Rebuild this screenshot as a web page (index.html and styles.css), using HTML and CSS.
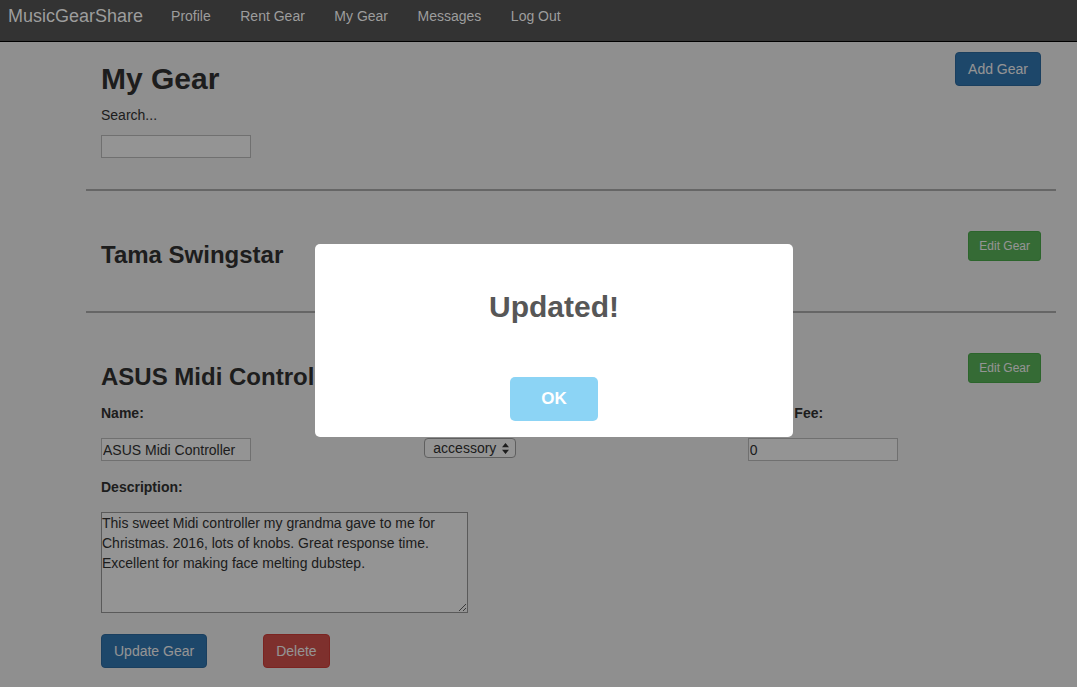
FILE: index.html
```html
<!DOCTYPE html>
<html lang="en">
<head>
<meta charset="utf-8">
<title>MusicGearShare - My Gear</title>
<link rel="stylesheet" href="styles.css">
</head>
<body>
<nav class="navbar">
  <a class="brand" href="#">MusicGearShare</a>
  <a class="nav-link" href="#">Profile</a>
  <a class="nav-link" href="#">Rent Gear</a>
  <a class="nav-link" href="#">My Gear</a>
  <a class="nav-link" href="#">Messages</a>
  <a class="nav-link" href="#">Log Out</a>
</nav>

<main class="container">
  <section class="page-head">
    <div class="page-title">
      <h2 class="title">My Gear</h2>
      <label class="search-label">Search...</label>
      <input class="text-input" type="text">
    </div>
    <button class="btn btn-primary btn-add">Add Gear</button>
  </section>

  <hr class="divider">

  <section class="gear">
    <div class="gear-head">
      <h3 class="gear-name">Tama Swingstar</h3>
      <button class="btn btn-success btn-sm">Edit Gear</button>
    </div>
  </section>

  <hr class="divider">

  <section class="gear gear-edit">
    <div class="gear-head">
      <h3 class="gear-name">ASUS Midi Controller</h3>
      <button class="btn btn-success btn-sm">Edit Gear</button>
    </div>
    <div class="field-grid">
      <label class="field-label">Name:</label>
      <label class="field-label">Category:</label>
      <label class="field-label">Rental Fee:</label>
      <input class="text-input" type="text" value="ASUS Midi Controller">
      <select class="select">
        <option>accessory</option>
      </select>
      <input class="text-input" type="text" value="0">
    </div>
    <label class="field-label desc-label">Description:</label>
    <textarea class="desc">This sweet Midi controller my grandma gave to me for Christmas. 2016, lots of knobs. Great response time. Excellent for making face melting dubstep.</textarea>
    <div class="actions">
      <button class="btn btn-primary">Update Gear</button>
      <button class="btn btn-danger">Delete</button>
    </div>
  </section>
</main>

<div class="overlay"></div>
<div class="alert">
  <h2 class="alert-title">Updated!</h2>
  <button class="alert-btn">OK</button>
</div>
</body>
</html>
```

FILE: styles.css
```css
html, body {
  margin: 0;
  padding: 0;
}
body {
  font-family: "Liberation Sans", Arial, sans-serif;
  font-size: 14px;
  line-height: 20px;
  color: #333;
  background: #f6f6f6;
  overflow: hidden;
  height: 687px;
}

/* navbar */
.navbar {
  position: relative;
  z-index: 20;
  display: flex;
  align-items: flex-start;
  height: 41px;
  background: #333;
  border-bottom: 1px solid #000;
  padding-left: 8px;
}
.brand {
  font-size: 18px;
  line-height: 20px;
  padding-top: 6px;
  color: #9d9d9d;
  text-decoration: none;
  margin-right: 13px;
}
.nav-link {
  font-size: 14px;
  line-height: 20px;
  padding: 6px 14.5px 0 15px;
  color: #9d9d9d;
  text-decoration: none;
}

/* container */
.container {
  width: 970px;
  margin-left: 86px;
}
.page-head {
  display: flex;
  justify-content: space-between;
  align-items: flex-start;
  padding: 0 15px;
}
.page-title {
  display: flex;
  flex-direction: column;
  align-items: flex-start;
  padding-bottom: 31px;
}
.title {
  margin: 20px 0 10px;
  font-size: 30px;
  line-height: 33px;
  font-weight: bold;
  color: #333;
}
.search-label {
  display: block;
  margin-bottom: 10px;
}
.text-input {
  box-sizing: border-box;
  width: 150px;
  height: 23px;
  border: 1px solid #c2c2c2;
  background: #fff;
  padding: 0 1px;
  font-family: "Liberation Sans", Arial, sans-serif;
  font-size: 14px;
  color: #333;
  margin: 0;
}

.btn {
  box-sizing: border-box;
  font-family: "Liberation Sans", Arial, sans-serif;
  font-size: 14px;
  line-height: 20px;
  padding: 6px 12px;
  border: 1px solid transparent;
  border-radius: 4px;
  color: #fff;
  cursor: pointer;
}
.btn-primary {
  background: #337ab7;
  border-color: #2e6da4;
}
.btn-success {
  background: #5cb85c;
  border-color: #4cae4c;
}
.btn-danger {
  background: #d9534f;
  border-color: #d43f3a;
}
.btn-sm {
  font-size: 12px;
  line-height: 18px;
  padding: 5px 10px;
  border-radius: 3px;
  margin-top: 40px;
}
.btn-add {
  margin-top: 10px;
}

.divider {
  margin: 0;
  border: 0;
  border-top: 2px solid #b0b0b0;
  height: 0;
}

/* gear items */
.gear {
  padding: 0 15px 43px;
}
.gear-head {
  display: flex;
  justify-content: space-between;
  align-items: flex-start;
}
.gear-name {
  margin: 51px 0 0;
  font-size: 24px;
  line-height: 26px;
  font-weight: bold;
  color: #333;
}
.field-grid {
  display: grid;
  grid-template-columns: repeat(3, 1fr);
  column-gap: 30px;
  row-gap: 15px;
  margin-top: 13px;
  align-items: start;
}
.field-label {
  display: block;
  font-weight: bold;
  line-height: 20px;
}
.select {
  -webkit-appearance: none;
  appearance: none;
  box-sizing: border-box;
  width: 92px;
  height: 20px;
  border: 1px solid #a4a4a4;
  border-radius: 4px;
  padding: 0 18px 0 8px;
  font-family: "Liberation Sans", Arial, sans-serif;
  font-size: 14px;
  line-height: 18px;
  color: #333;
  background: #fff url("data:image/svg+xml,%3Csvg xmlns='http://www.w3.org/2000/svg' width='7' height='11'%3E%3Cpath d='M3.5 0L7 4.2H0z M3.5 11L0 6.8h7z' fill='%23333'/%3E%3C/svg%3E") no-repeat right 6px center;
}
.desc-label {
  margin-top: 16px;
  margin-bottom: 15px;
}
.desc {
  display: block;
  box-sizing: border-box;
  width: 367px;
  height: 101px;
  border: 1px solid #9c9c9c;
  background: #fff;
  padding: 0 1px 0 0;
  margin: 0;
  font-family: "Liberation Sans", Arial, sans-serif;
  font-size: 14px;
  line-height: 20px;
  color: #333;
}
.actions {
  display: flex;
  gap: 56px;
  margin-top: 21px;
}

/* sweet alert overlay */
.overlay {
  position: fixed;
  inset: 0;
  background: rgba(0, 0, 0, 0.42);
  z-index: 10;
}
.alert {
  position: fixed;
  z-index: 30;
  left: 315px;
  top: 244px;
  width: 478px;
  height: 193px;
  box-sizing: border-box;
  background: #fff;
  border-radius: 5px;
  display: flex;
  flex-direction: column;
  align-items: center;
}
.alert-title {
  margin: 43px 0 0;
  font-size: 30px;
  line-height: 40px;
  font-weight: bold;
  color: #575757;
}
.alert-btn {
  margin-top: 50px;
  width: 88px;
  height: 44px;
  border: 0;
  border-radius: 5px;
  background: #8cd4f5;
  color: #fff;
  font-family: "Liberation Sans", Arial, sans-serif;
  font-size: 17px;
  font-weight: bold;
  cursor: pointer;
}
```
